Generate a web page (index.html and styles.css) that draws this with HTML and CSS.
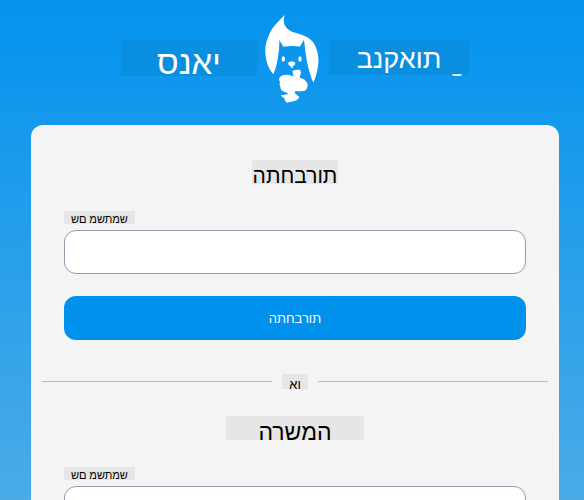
FILE: index.html
```html
<!DOCTYPE html>
<html lang="he">
<head>
<meta charset="utf-8">
<meta name="viewport" content="width=device-width, initial-scale=1">
<title>תורבחתה</title>
<link rel="stylesheet" href="styles.css">
</head>
<body>
<div class="page">
  <header class="brand">
    <span class="brand-name brand-start" dir="rtl">יאנס</span>
    <svg class="logo" viewBox="0 0 56 90" aria-hidden="true">
      <path class="light" d="M19.700 1C18.500 5 18.500 9 20 11.500Q22 15.500 27 17.700Q36 20 42 23Q49 27 51.500 35Q54.500 43 53 52Q51.500 62 48.300 68.700C44 59 41 46 39 25.700L35 32.500Q26.500 31.500 18.300 32.700L14.300 26Q14.500 34 13.300 41Q12 52 8.300 60.300Q3 54 1.500 47C-.5 38 0 30 3.300 22.700Q6 15 11.700 9.300Q16 4.500 19.700 1Z"/>
      <ellipse class="light" cx="18.300" cy="45" rx="1.700" ry="2.700"/>
      <ellipse class="light" cx="35" cy="45" rx="1.700" ry="2.700"/>
      <path class="light" d="M23.200 49C24 47 29.500 47 30.300 49C30.300 51 28.500 52 27.500 52.500V54H26V52.500C24.500 52 23.200 51 23.200 49Z"/>
      <path class="light" d="M27.500 57.500Q27 56.500 28.500 56.500L34 55.500Q35.500 55.500 36 58.700L34.700 63.700Q40 65 41 67.500Q43.500 70 42.300 73Q41.500 76.500 39 77Q34 77.500 31.300 77Q29 77.500 30 79.300L34.500 83.300Q32.500 86.500 29.300 87L21.700 88.700Q20 87 19.300 84.300L15.700 81.700Q17 81 23.300 80.300Q22.500 78.500 20 78Q15.500 77 15.300 72.700Q14 70 15 68.300Q13.500 66 14.300 64Q15.500 61.500 19 61Q23 60 28.500 62.300Z"/>
    </svg>
    <span class="brand-name brand-end" dir="rtl">תואקנב</span>
  </header>
  <main class="card">
    <form class="section">
      <h1 class="title title-login" dir="rtl">תורבחתה</h1>
      <label class="label" for="login-user" dir="rtl">שמתשמ םש</label>
      <input class="field" id="login-user" type="text">
      <button class="submit" type="button"><span class="submit-text" dir="rtl">תורבחתה</span></button>
    </form>
    <div class="divider"><span class="divider-text" dir="rtl">וא</span></div>
    <form class="section">
      <h2 class="title title-signup" dir="rtl">המשרה</h2>
      <label class="label" for="signup-user" dir="rtl">שמתשמ םש</label>
      <input class="field" id="signup-user" type="text">
    </form>
  </main>
</div>
</body>
</html>
```
FILE: styles.css
```css
* { box-sizing: border-box; }

html, body { height: 100%; margin: 0; }

body {
  overflow: hidden;
  color: #000;
  font-family: "Noto Sans", sans-serif;
  background: linear-gradient(#0393ee, #4babe7);
}

.page { padding: 14px 25px 0 31px; }

.brand {
  display: flex;
  justify-content: center;
  align-items: flex-start;
  gap: 8px;
  height: 111px;
}

.brand-name {
  position: relative;
  margin-top: 25px;
  color: #fff;
  background: #0a8fe0;
  text-align: center;
}

.brand-start { width: 136px; height: 37px; font-size: 33px; line-height: 46px; }

.brand-end {
  width: 140px;
  height: 35px;
  margin-top: 26px;
  font-size: 27px;
  line-height: 36px;
}

.brand-end::after {
  content: "";
  position: absolute;
  right: 7px;
  bottom: -1px;
  width: 10px;
  height: 2px;
  border-radius: 0 0 5px 5px;
  background: #d5edfc;
}

.logo { width: 56px; height: 90px; }

.light { fill: #fff; }

.card {
  padding: 35px 11px;
  border-radius: 12px;
  background: #f4f4f4;
}

.section {
  display: flex;
  flex-direction: column;
  padding: 0 22px;
}

.title {
  align-self: center;
  height: 24px;
  margin: 0 0 27px;
  font-weight: 400;
  line-height: 30px;
  text-align: center;
  background: #e6e6e6;
}

.title-login { padding: 0 1px; font-size: 21px; }

.title-signup { width: 138px; font-size: 23px; }

.label {
  align-self: flex-start;
  height: 13px;
  margin: 0 0 6px;
  padding: 0 7px;
  font-size: 11px;
  line-height: 16px;
  background: #e6e6e6;
}

.field {
  width: 100%;
  height: 44px;
  padding: 0 12px;
  border: 1px solid #9a98ad;
  border-radius: 12px;
  background: #fff;
  font: inherit;
}

.submit {
  height: 44px;
  margin-top: 22px;
  padding: 0;
  border: 0;
  border-radius: 12px;
  color: #fff;
  background: #0091ed;
  font: inherit;
  font-size: 13px;
}

.divider {
  display: flex;
  align-items: center;
  gap: 10px;
  height: 15px;
  margin: 34px 0 27px;
}

.divider::before,
.divider::after {
  content: "";
  flex: 1;
  height: 1px;
  background: #bab9cc;
}

.divider-text {
  width: 26px;
  height: 15px;
  font-size: 13px;
  line-height: 20px;
  text-align: center;
  background: #e6e6e6;
}
```
